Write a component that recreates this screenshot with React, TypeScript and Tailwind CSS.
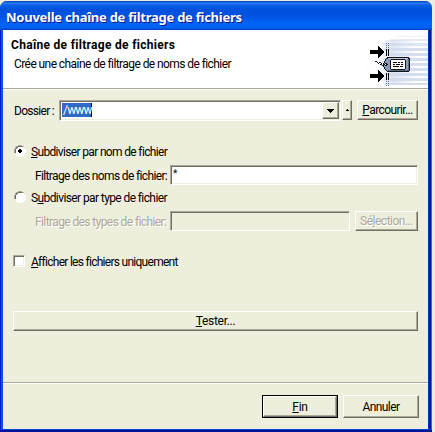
import React from 'react';
import clsx from 'clsx';

interface BoxProps {
  className?: string;
  children?: React.ReactNode;
}

interface ButtonProps extends BoxProps {
  disabled?: boolean;
  isDefault?: boolean;
}

const raised =
  'border border-t-white border-l-white border-r-[#716f64] border-b-[#716f64] shadow-[inset_-1px_-1px_0_#aca899]';
const sunken =
  'border border-t-[#aca899] border-l-[#aca899] border-r-white border-b-white shadow-[inset_1px_1px_0_#716f64,inset_-1px_-1px_0_#eeeedc]';

const Button: React.FC<ButtonProps> = ({ className, children, disabled, isDefault }) => {
  const face = (
    <button
      disabled={disabled}
      className={clsx(
        'flex items-center justify-center bg-[#eeeedc] whitespace-nowrap',
        raised,
        disabled && 'text-[#aca899] [text-shadow:1px_1px_0_#fff]',
        isDefault ? 'h-full w-full' : className
      )}
    >
      <span className="leading-[14px]">{children}</span>
    </button>
  );
  return isDefault ? <div className={clsx('border border-black', className)}>{face}</div> : face;
};

const Field: React.FC<BoxProps> = ({ className, children }) => (
  <div className={clsx('flex', sunken, className)}>{children}</div>
);

const Radio: React.FC<{ checked?: boolean }> = ({ checked }) => (
  <svg width="12" height="12" viewBox="0 0 12 12" className="shrink-0" shapeRendering="crispEdges">
    <path d="M4 1h4v1h2v2h1v4h-1v2H8v1H4v-1H2V8H1V4h1V2h2z" fill="#fff" />
    <path d="M4 0h4v1h2v1H8V1H4v1H2v2H1v4H0V4h1V2h1V1h2z" fill="#aca899" />
    <path d="M4 1h4v1H4v1H3v1H2v4H1V4h1V2h2z" fill="#716f64" />
    <path d="M11 4h1v4h-1v2h-1v1H8v1H4v-1H2v-1h2v1h4v-1h2V8h1z" fill="#fff" />
    {checked && <path d="M5 4h2v1h1v2H7v1H5V7H4V5h1z" fill="#000" />}
  </svg>
);

// Label tag with arrows, drawn over the striped corner of the banner
const FilterIcon = () => (
  <svg width="58" height="58" viewBox="370 30 58 58" shapeRendering="crispEdges">
    <defs>
      <linearGradient id="stripes" gradientUnits="userSpaceOnUse" x1="374" x2="428" y1="0" y2="0">
        <stop offset="0" stopColor="#d3ddf0" stopOpacity="0" />
        <stop offset=".35" stopColor="#cdd8ec" stopOpacity=".75" />
        <stop offset="1" stopColor="#d3ddee" />
      </linearGradient>
      <linearGradient id="glow" x1="0" x2="1">
        <stop offset="0" stopColor="#e0e7f5" stopOpacity="0" />
        <stop offset=".4" stopColor="#d6dff0" stopOpacity=".8" />
        <stop offset="1" stopColor="#dce5f5" stopOpacity="0" />
      </linearGradient>
    </defs>
    <path d="M384 40h34v45h-34l-7-14V52z" fill="url(#glow)" />
    <g fill="url(#stripes)">
      <rect x="397" y="36" width="31" height="1" opacity=".4" />
      <rect x="390" y="39" width="38" height="2" opacity=".6" />
      <rect x="382" y="43" width="46" height="3" opacity=".8" />
      <rect x="377" y="48" width="51" height="3" />
      <rect x="374" y="53" width="54" height="3" />
      <rect x="372" y="58" width="56" height="3" />
      <rect x="372" y="63" width="56" height="3" />
      <rect x="373" y="68" width="55" height="3" />
      <rect x="375" y="73" width="53" height="3" />
      <rect x="380" y="78" width="48" height="3" />
      <rect x="385" y="83" width="43" height="2" />
    </g>
    <g fill="#000">
      <path d="M370 50h8v-4h1v1h1v1h1v1h1v1h1v1h1v2h-1v1h-1v1h-1v1h-1v1h-1v1h-1v-4h-8z" />
      <path d="M370 74h8v-4h1v1h1v1h1v1h1v1h1v1h1v2h-1v1h-1v1h-1v1h-1v1h-1v1h-1v-4h-8z" />
      <path d="M386 49h1v7h-1zM388 49h1v7h-1zM386 73h1v7h-1zM388 73h1v7h-1z" />
    </g>
    <path
      d="M386 43h1v1h-1zM388 43h1v1h-1zM386 45h1v1h-1zM388 45h1v1h-1zM386 47h1v1h-1zM388 47h1v1h-1zM386 81h1v1h-1zM388 81h1v1h-1zM386 83h1v1h-1zM388 83h1v1h-1zM386 85h1v1h-1zM388 85h1v1h-1z"
      fill="#5870a0"
    />
    <path d="M387 57h22v1h1v13h-1v1h-22v-1h-1v-1h-1v-1h-1v-2h-1v-4h1v-2h1v-2h1v-1h1z" fill="#10141c" />
    <path d="M388 58h20v1h1v12h-22v-1h-1v-1h-1v-2h-1v-4h1v-2h1v-2h2z" fill="#8c9db8" />
    <path d="M388 58h20v1h-20z" fill="#b7c4d8" />
    <path d="M408 59h1v12h-21v-1h20z" fill="#596a84" />
    <path d="M391 59h14v1h1v9h-1v1h-14v-1h-1v-9h1z" fill="#10141c" />
    <rect x="391" y="60" width="14" height="9" fill="#fff" />
    <path d="M393 62h4v1h-4zM398 62h2v1h-2zM401 62h2v1h-2zM393 64h2v1h-2zM396 64h4v1h-4zM401 64h2v1h-2zM393 66h6v1h-6zM400 66h3v1h-3z" fill="#000" />
    {/* String */}
    <path d="M375 61h2v1h-2zM377 62h1v1h-1zM378 63h1v1h-1zM379 62h2v1h-2zM381 63h1v1h-1zM380 64h2v1h-2zM382 65h2v1h-2zM384 64h1v-1h2v1h1v1h-1v1h-2v-1h-1z" fill="#10141c" />
    <rect x="385" y="64" width="1" height="1" fill="#fff" />
  </svg>
);

const App: React.FC = () => (
  <div className="h-[432px] w-[435px] overflow-hidden bg-[#eeeedc] pt-px font-[Roboto,sans-serif] text-[12px] leading-[14px] text-black">
    <div className="flex h-[431px] w-[432px] flex-col rounded-t-[7px] bg-[linear-gradient(90deg,#0021c4_0,#0021c4_1px,#0855dd_1px,#0855dd_3px,#0033cc_3px,#0033cc_429px,#001695_429px,#001695_431px,#5262cf_431px)]">
      {/* Title bar */}
      <div className="flex h-[29px] shrink-0 items-center rounded-t-[7px] bg-[linear-gradient(180deg,#0038b8_0%,#2b7af5_7%,#0860e8_15%,#0050db_30%,#0054e3_55%,#0065fa_80%,#0060f4_92%,#0040c0_100%)] pt-[2px] pl-[6px]">
        <span className="font-['Noto_Sans',sans-serif] text-[13px] leading-[18px] font-bold tracking-[-0.25px] whitespace-nowrap text-white [text-shadow:1px_1px_0_#0a1883]">
          Nouvelle chaîne de filtrage de fichiers
        </span>
      </div>

      <div className="ml-[3px] flex h-[399px] w-[425px] flex-col bg-[#eeeedc]">
        {/* Banner */}
        <div className="flex h-[59px] shrink-0 justify-between border-b border-[#aca899] bg-white">
          <div className="pt-[8px] pl-[8px] whitespace-nowrap">
            <div className="font-bold tracking-[0.3px]">Chaîne de filtrage de fichiers</div>
            <div className="mt-[5px] pl-[3px] tracking-[-0.58px]">Crée une chaîne de filtrage de noms de fichier</div>
          </div>
          <FilterIcon />
        </div>

        {/* Form */}
        <div className="flex h-[293px] shrink-0 flex-col border-t border-white pt-[10px] pl-[10px] whitespace-nowrap">
          <div className="flex h-[21px]">
            <div className="w-[46px] pt-[4px] pl-px tracking-[-0.7px]">Dossier :</div>
            <Field className="w-[282px] bg-white p-px">
              <div className="mt-px ml-px h-[14px] w-[30px] border-r border-black bg-[#316ac5] pl-px leading-[14px] tracking-[-0.8px] text-white">
                /www
              </div>
              <Button className="ml-auto h-[17px] w-[17px]">
                <svg width="7" height="4" viewBox="0 0 7 4" shapeRendering="crispEdges">
                  <path d="M0 0h7v1H6v1H5v1H4v1H3V3H2V2H1V1H0z" />
                </svg>
              </Button>
            </Field>
            <Button className="ml-px h-[20px] w-[10px]">
              <svg width="3" height="2" viewBox="0 0 3 2" shapeRendering="crispEdges">
                <path d="M1 0h1v1h1v1H0V1h1z" />
              </svg>
            </Button>
            <Button className="ml-[5px] h-[20px] w-[61px] tracking-[-0.6px]">
              <u>P</u>arcourir...
            </Button>
          </div>

          <div className="mt-[24px] flex h-[14px] gap-[5px] pl-px">
            <Radio checked />
            <div className="tracking-[-0.66px]"><u>S</u>ubdiviser par nom de fichier</div>
          </div>
          <div className="mt-[6px] flex h-[20px]">
            <div className="w-[157px] pt-[4px] pl-[22px] tracking-[-0.64px]">Filtrage des noms de fichier:</div>
            <Field className="w-[248px] bg-white">
              <span className="pl-[2px] text-[10px] leading-[15px]">*</span>
            </Field>
          </div>

          <div className="mt-[6px] flex h-[14px] gap-[5px] pl-px">
            <Radio />
            <div className="tracking-[-0.6px]">S<u>u</u>bdiviser par type de fichier</div>
          </div>
          <div className="mt-[6px] flex h-[20px]">
            <div className="w-[157px] pt-[4px] pl-[22px] tracking-[-0.6px] text-[#aca899] [text-shadow:1px_1px_0_#fff]">
              Filtrage des types de fichier:
            </div>
            <Field className="w-[180px] bg-[#eeeedc]" />
            <Button disabled className="ml-[5px] h-[20px] w-[63px] tracking-[-0.5px]">
              Sé<u>l</u>ection...
            </Button>
          </div>

          <div className="mt-[24px] flex h-[14px] gap-[6px]">
            <Field className="h-[12px] w-[12px] bg-white" />
            <div className="tracking-[-0.72px]"><u>A</u>fficher les fichiers uniquement</div>
          </div>

          <Button className="mt-[42px] h-[20px] w-[405px] tracking-[-0.3px]">
            <u>T</u>ester...
          </Button>
        </div>

        {/* Footer */}
        <div className="flex h-[47px] shrink-0 gap-[5px] border-t border-[#aca899] pl-[259px] shadow-[inset_0_1px_0_#fff]">
          <Button isDefault className="mt-[12px] h-[23px] w-[76px] tracking-[-0.3px]">
            <u>F</u>in
          </Button>
          <Button className="mt-[12px] h-[23px] w-[76px] tracking-[-0.6px]">Annuler</Button>
        </div>
      </div>

      <div className="h-[3px] w-full bg-[linear-gradient(180deg,#0040d8_0,#0040d8_1px,#001695_1px)]" />
    </div>
  </div>
);

export default App;
